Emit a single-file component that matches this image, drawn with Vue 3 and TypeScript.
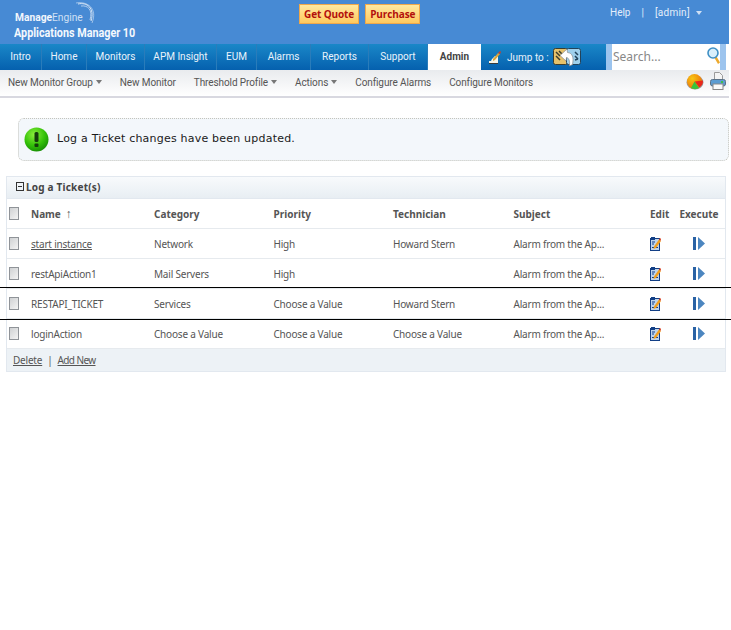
<script setup lang="ts">
const tabs = [
  { label: 'Intro', w: 42 },
  { label: 'Home', w: 45 },
  { label: 'Monitors', w: 58 },
  { label: 'APM Insight', w: 72 },
  { label: 'EUM', w: 40 },
  { label: 'Alarms', w: 54 },
  { label: 'Reports', w: 58 },
  { label: 'Support', w: 59 },
]
const subItems = [
  { label: 'New Monitor Group', caret: true },
  { label: 'New Monitor', caret: false },
  { label: 'Threshold Profile', caret: true },
  { label: 'Actions', caret: true },
  { label: 'Configure Alarms', caret: false },
  { label: 'Configure Monitors', caret: false },
]
const rows = [
  { name: 'start instance', link: true, category: 'Network', priority: 'High', tech: 'Howard Stern' },
  { name: 'restApiAction1', link: false, category: 'Mail Servers', priority: 'High', tech: '' },
  { name: 'RESTAPI_TICKET', link: false, category: 'Services', priority: 'Choose a Value', tech: 'Howard Stern' },
  { name: 'loginAction', link: false, category: 'Choose a Value', priority: 'Choose a Value', tech: 'Choose a Value' },
]
</script>

<template>
  <div class="page">
    <header class="top">
      <div class="logo">
        <div class="me">
          <div class="me-text"><span class="me-a">Manage</span><span class="me-b">Engine</span></div>
          <svg class="arc" width="24" height="24" viewBox="0 0 24 24" fill="none" stroke="#dbe8f7">
            <path d="M4 2c9-2 17 4 13 17" stroke-width="1" />
            <path d="M7 4c7-1 12 4 9 14" stroke-width="1" opacity=".7" />
            <path d="M2 1c11-2 22 5 16 20" stroke-width="1" opacity=".6" />
          </svg>
        </div>
        <div class="am">Applications Manager 10</div>
      </div>
      <div class="quote">
        <span class="qbtn">Get Quote</span>
        <span class="qbtn">Purchase</span>
      </div>
      <div class="user">
        <span>Help</span><span class="pipe">|</span><span class="admin">[admin]</span><span class="ucaret"></span>
      </div>
    </header>

    <nav class="nav">
      <div v-for="t in tabs" :key="t.label" class="tab" :style="{ width: t.w + 'px' }">{{ t.label }}</div>
      <div class="tab active">Admin</div>
      <div class="jump">
        <svg width="13" height="13" viewBox="0 0 13 13">
          <path d="M1 12h9V5H7L4 8 3 10H1z" fill="#f7f5e8" />
          <path d="M5 8l5-6 2 1-5 6-2 1z" fill="#d9a53a" />
          <path d="M10 2l2 1 1-2-1-1z" fill="#c8402c" />
          <path d="M1 12.500h9" stroke="#3a3a3a" />
        </svg>
        <span class="jump-text">Jump to :</span>
        <svg class="jump-ic" width="28" height="20" viewBox="0 0 28 20">
          <rect x="0.500" y="1.500" width="14" height="16" rx="2" fill="#e5c16a" stroke="#3c3c2c" />
          <rect x="13.500" y="1.500" width="14" height="16" rx="2" fill="#9fd0ec" stroke="#23435a" />
          <path d="M3 5l4 4M3 9l4 4M6 4l3 3" stroke="#3c3c2c" stroke-width="1.500" />
          <path d="M22 5l3 3M22 9l3 3M22 13l3-1" stroke="#23435a" stroke-width="1.500" />
          <path d="M7 8.500L14 2l.500 3.500c5 .5 6.500 5 5 12l-3 1.500c.5-5-.5-8-3-8.500l-.5 3.500z" fill="#fff" stroke="#8a8a8a" stroke-width=".7" />
        </svg>
      </div>
      <div class="search">
        <span class="search-in">Search...</span>
        <svg class="lens" width="13" height="18" viewBox="0 0 13 18">
          <path d="M7.500 11l3.500 6 2-1.500-3.500-6z" fill="#eda92c" />
          <circle cx="6" cy="6" r="5" fill="#d9effb" stroke="#3f8fc4" stroke-width="1.600" />
        </svg>
      </div>
    </nav>

    <div class="sub">
      <div v-for="s in subItems" :key="s.label" class="sub-item">
        {{ s.label }}<span v-if="s.caret" class="scaret"></span>
      </div>
      <div class="sub-icons">
        <svg width="18" height="16" viewBox="0 0 18 16">
          <defs>
            <radialGradient id="pieg" cx=".35" cy=".3" r=".8">
              <stop offset="0" stop-color="#f7c514" />
              <stop offset="1" stop-color="#ee6a04" />
            </radialGradient>
          </defs>
          <ellipse cx="9" cy="8.500" rx="8.500" ry="7" fill="#9a9a9a" />
          <circle cx="8.500" cy="7.500" r="7.500" fill="url(#pieg)" />
          <path d="M8.500 7.500L17 6.500A8 8 0 0 1 13.500 13.500z" fill="#e8281c" />
          <path d="M8.500 7.500L13 14A8 8 0 0 1 5 14z" fill="#38c43c" />
        </svg>
        <svg width="16" height="19" viewBox="0 0 16 19">
          <path d="M4.500 .5h5l3 3v6h-8z" fill="#f4f4f4" stroke="#9b9b9b" />
          <rect x=".5" y="7.500" width="15" height="6.500" rx="2" fill="#5c9cd2" stroke="#5b7186" />
          <rect x="3" y="12" width="10" height="5.500" fill="#fafafa" stroke="#888" />
          <rect x="11" y="9" width="2" height="2" fill="#3fbf4a" />
        </svg>
      </div>
    </div>

    <section class="msg">
      <svg width="25" height="25" viewBox="0 0 25 25">
        <defs>
          <radialGradient id="okg" cx=".4" cy=".3" r=".75">
            <stop offset="0" stop-color="#8cf03c" />
            <stop offset=".6" stop-color="#32c008" />
            <stop offset="1" stop-color="#158a04" />
          </radialGradient>
        </defs>
        <circle cx="12.500" cy="12.500" r="12" fill="url(#okg)" />
        <rect x="10.500" y="5" width="4" height="10" rx="1.500" fill="#143c0c" />
        <rect x="10.500" y="16.500" width="4" height="3.500" rx="1" fill="#143c0c" />
      </svg>
      <span class="msg-text">Log a Ticket changes have been updated.</span>
    </section>

    <section class="panel">
      <div class="panel-head">
        <span class="minus"></span>
        <span class="panel-title">Log a Ticket(s)</span>
      </div>
      <div class="row head">
        <span class="c-check"><span class="cb"></span></span>
        <span class="c-name">Name <span class="arrow">↑</span></span>
        <span class="c-cat">Category</span>
        <span class="c-pri">Priority</span>
        <span class="c-tech">Technician</span>
        <span class="c-sub">Subject</span>
        <span class="c-edit">Edit</span>
        <span class="c-exec">Execute</span>
      </div>
      <div v-for="r in rows" :key="r.name" class="row">
        <span class="c-check"><span class="cb"></span></span>
        <span class="c-name" :class="{ link: r.link }">{{ r.name }}</span>
        <span class="c-cat">{{ r.category }}</span>
        <span class="c-pri">{{ r.priority }}</span>
        <span class="c-tech">{{ r.tech }}</span>
        <span class="c-sub">Alarm from the Ap...</span>
        <span class="c-edit">
          <svg width="11" height="14" viewBox="0 0 11 14">
            <rect x=".5" y="1.500" width="9" height="12" fill="#bcd4ee" stroke="#123f86" />
            <rect x="1" y="0" width="4" height="3" fill="#123f86" />
            <path d="M2 5h3M2 7h2M2 10.500h6" stroke="#123f86" />
            <path d="M4 9.500l5-7 2 1.500-5 7-2.500 1z" fill="#f0a020" />
            <path d="M9 2.500l1-1.500 1 1-.5 2z" fill="#d83a1c" />
          </svg>
        </span>
        <span class="c-exec">
          <svg width="12" height="13" viewBox="0 0 12 13">
            <rect x="0" y="0" width="3" height="13" fill="#2a62a4" />
            <path d="M5 0l7 6.500L5 13z" fill="#4c86c0" />
          </svg>
        </span>
      </div>
      <div class="panel-foot">
        <span class="foot-link">Delete</span>
        <span class="foot-sep">|</span>
        <span class="foot-link add">Add New</span>
      </div>
    </section>

    <div class="rule rule-a"></div>
    <div class="rule rule-b"></div>
  </div>
</template>

<style>
html, body { margin: 0; background: #fff; overflow: hidden; }
</style>

<style scoped>
.page {
  position: relative;
  width: 731px;
  height: 630px;
  overflow: hidden;
  background: #fff;
  font-family: "DejaVu Sans", sans-serif;
  font-size: 10px;
  color: #555;
}
.top {
  width: 729px;
  height: 44px;
  background: #478ad4;
  display: flex;
  position: relative;
  color: #fff;
  box-sizing: border-box;
}
.logo { width: 299px; padding: 12px 0 0 14px; box-sizing: border-box; }
.me { position: relative; line-height: 12px; padding-left: 1px; }
.me-text { font-family: Roboto, sans-serif; font-size: 11px; transform: scaleX(.93); transform-origin: left; white-space: nowrap; }
.me-a { font-weight: 700; color: #f2f6fc; }
.me-b { color: #cfe0f4; }
.arc { position: absolute; left: 60px; top: -10px; }
.am {
  font-family: Roboto, sans-serif;
  font-weight: 700;
  font-size: 13px;
  line-height: 15px;
  margin-top: 1px;
  color: #f4f8fd;
  white-space: nowrap;
  transform: scaleX(.83);
  transform-origin: left;
}
.quote { display: flex; gap: 6px; padding-top: 4px; align-items: flex-start; }
.qbtn {
  height: 18px;
  line-height: 18px;
  padding: 0 4px;
  background: linear-gradient(#ffe9a0, #ffc95e);
  border: 1px solid #f0a84a;
  color: #b3100c;
  font-weight: 700;
  font-size: 10px;
  letter-spacing: -.1px;
  font-family: "Open Sans", sans-serif;
}
.user {
  position: absolute;
  left: 610px;
  top: 7px;
  display: flex;
  align-items: center;
  color: #e4eefa;
  font-size: 10px;
  font-family: Roboto, sans-serif;
}
.admin { letter-spacing: .25px; }
.pipe { margin: 0 11px; }
.ucaret { margin-left: 6px; border: 3px solid transparent; border-top: 4px solid #cfe0f4; border-bottom: 0; }
.nav {
  width: 726px;
  height: 26px;
  display: flex;
  background: linear-gradient(#1a87c8, #0560ae);
  color: #eaf3fb;
  font-size: 10px;
  font-family: Roboto, sans-serif;
}
.tab {
  box-sizing: border-box;
  text-align: center;
  line-height: 25px;
  border-right: 1px solid #2a7cba;
  white-space: nowrap;
}
.tab.active {
  width: 53px;
  background: #fff;
  color: #444;
  font-weight: 700;
  border-right: 0;
}
.jump { width: 125px; display: flex; align-items: center; padding: 0 0 0 7px; box-sizing: border-box; }
.jump-text { margin-left: 6px; }
.jump-ic { margin-left: 4px; }
.search {
  width: 120px;
  flex: none;
  box-sizing: border-box;
  border-left: 6px solid #9cc4ee;
  border-right: 6px solid #9cc4ee;
  background: #fff;
  position: relative;
  color: #888;
  font-size: 12px;
  line-height: 26px;
  padding-left: 1px;
  font-family: "Noto Sans", sans-serif;
}
.lens { position: absolute; right: 0; top: 3px; }
.sub {
  width: 721px;
  height: 26px;
  display: flex;
  align-items: center;
  background: linear-gradient(#e9ebee, #fff);
  border-bottom: 2px solid #d8d8e0;
  padding-left: 8px;
  box-sizing: content-box;
  gap: 18px;
  font-size: 10px;
  font-family: Roboto, sans-serif;
  color: #555;
}
.sub-item { white-space: nowrap; display: flex; align-items: center; margin-top: -2px; letter-spacing: -.1px; }
.scaret { margin-left: 3px; border: 3px solid transparent; border-top: 4px solid #777; border-bottom: 0; }
.sub-icons { margin-left: auto; display: flex; align-items: center; gap: 6px; padding-right: 3px; margin-top: -3px; }
.msg {
  margin: 20px 0 0 18px;
  width: 711px;
  height: 43px;
  box-sizing: border-box;
  background: #f3f7fb;
  border: 1px dotted #c4c4bc;
  border-radius: 6px;
  display: flex;
  align-items: center;
  padding-left: 5px;
  gap: 8px;
  color: #1a1a1a;
  font-size: 11px;
}
.msg-text { letter-spacing: .21px; margin-top: -2px; }
.panel {
  margin: 15px 0 0 6px;
  width: 720px;
  box-sizing: border-box;
  border: 1px solid #e2e8ef;
  font-family: "Noto Sans", sans-serif;
}
.panel-head {
  height: 21px;
  background: linear-gradient(#f8fafc, #e8eef3);
  display: flex;
  align-items: center;
  gap: 2px;
  padding-left: 9px;
  font-weight: 700;
  color: #444;
  font-size: 10px;
  border-bottom: 1px solid #e2e8ef;
}
.panel-title { letter-spacing: .2px; margin-top: -2px; }
.minus { width: 6px; height: 7px; border: 1px solid #333; position: relative; margin-top: -2px; }
.minus::after { content: ""; position: absolute; left: 1px; right: 1px; top: 3px; height: 1px; background: #333; }
.row {
  height: 30px;
  box-sizing: border-box;
  display: flex;
  align-items: center;
  border-bottom: 1px solid #e6eaee;
  color: #555;
  font-size: 10px;
  white-space: nowrap;
  letter-spacing: -.2px;
}
.row.head { font-weight: 700; color: #555; letter-spacing: 0; }
.arrow { font-weight: 400; font-size: 12px; margin-left: 2px; }
.c-check { width: 24px; padding-left: 2px; box-sizing: border-box; display: flex; }
.c-name { width: 123px; }
.c-cat { width: 119.500px; }
.c-pri { width: 119.500px; }
.c-tech { width: 120.500px; }
.c-sub { width: 136.500px; }
.c-edit { width: 29px; display: flex; justify-content: flex-start; }
.c-exec { width: 40px; display: flex; justify-content: center; }
.link { text-decoration: underline; }
.cb {
  width: 8px;
  height: 11px;
  border: 1px solid #8f9398;
  background: linear-gradient(135deg, #cfd1d3, #f4f4f4);
  display: block;
}
.panel-foot {
  height: 22px;
  background: #edf2f6;
  display: flex;
  align-items: center;
  padding-left: 6px;
  font-size: 10px;
  color: #555;
  letter-spacing: -.2px;
}
.foot-link { text-decoration: underline; }
.foot-link.add { letter-spacing: -.6px; }
.foot-sep { margin: 0 5px; }
.rule { position: absolute; left: 0; right: 0; height: 1px; background: #000; }
.rule-a { top: 287px; }
.rule-b { top: 319px; }
</style>
